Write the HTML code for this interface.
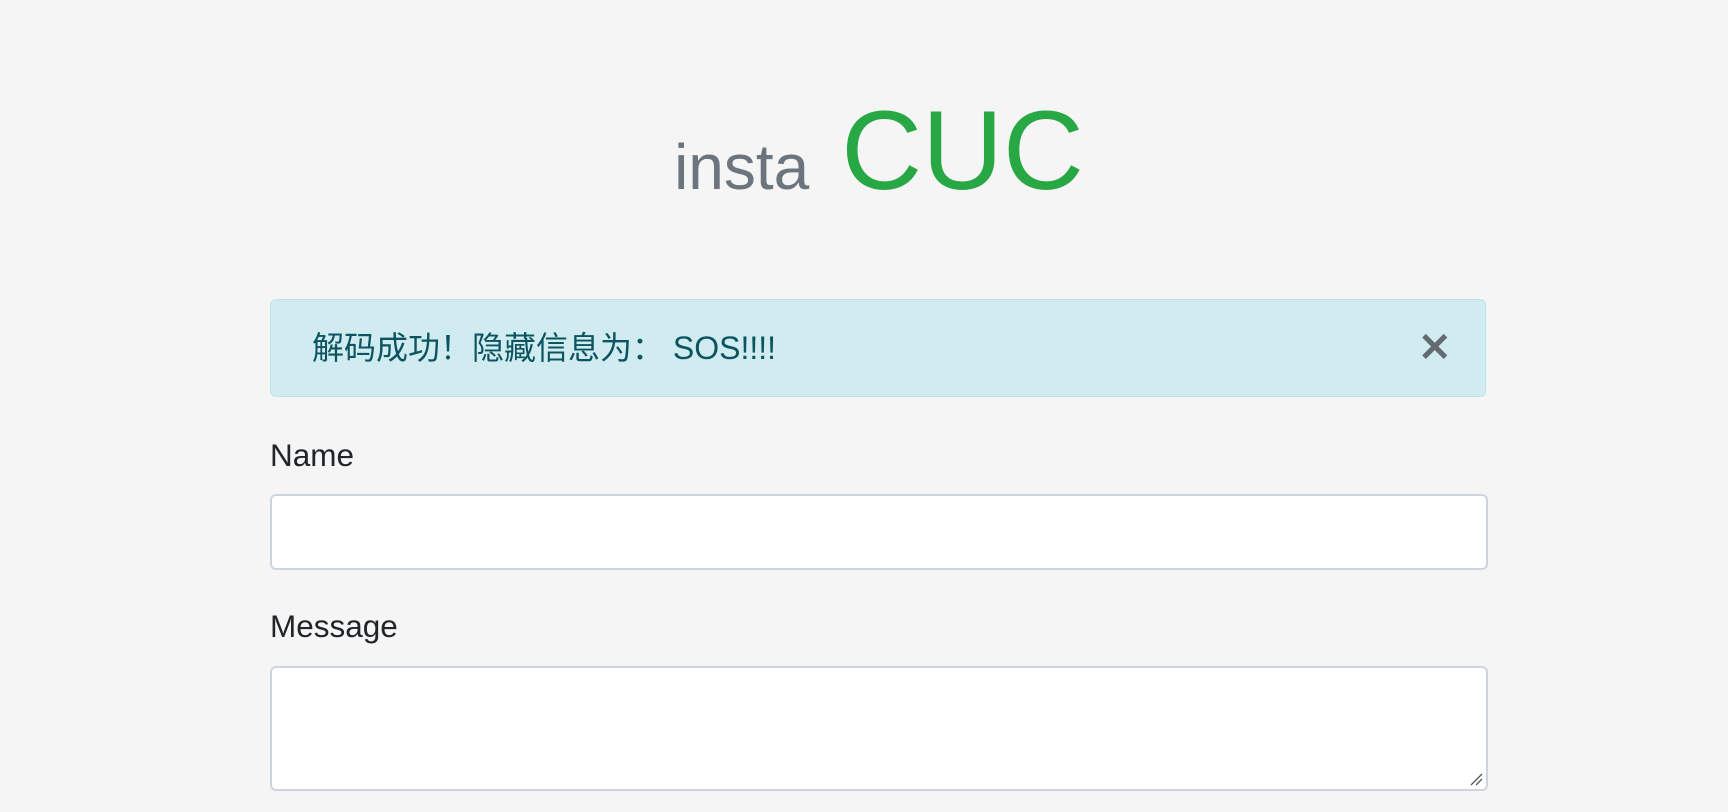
<!DOCTYPE html>
<html><head><meta charset="utf-8"><style>
body{margin:0;background:#f5f5f5;width:1728px;height:812px;overflow:hidden;font-family:"Liberation Sans","Noto Sans CJK SC",sans-serif;position:relative}
.t{position:absolute;left:0;width:1728px;text-align:center;top:86px;white-space:nowrap;padding-left:30px;box-sizing:border-box}
.i{color:#6c757d;font-size:64px}
.c{color:#28a745;font-size:112px;margin-left:32px}
.alert{position:absolute;left:270px;top:299px;width:1214px;height:96px;background:#d1ecf1;border:1px solid #bee5eb;border-radius:6px;color:#0c5460;font-size:32px;box-sizing:content-box}
.alert span{position:absolute;left:41px;top:29px;line-height:38px;white-space:nowrap}
.x{position:absolute;left:1147px;top:25px;font-size:40px;font-weight:bold;color:#646b70;line-height:46px}
.lbl{position:absolute;left:270px;font-size:31.5px;color:#212529}
.in{position:absolute;left:270px;width:1214px;background:#fff;border:2px solid #ced4da;border-radius:6px}
</style></head><body>
<div class="t"><span class="i">insta</span><span class="c">CUC</span></div>
<div class="alert"><span>解码成功！隐藏信息为： SOS!!!!</span><div class="x">✕</div></div>
<div class="lbl" style="top:437px">Name</div>
<div class="in" style="top:494px;height:72px"></div>
<div class="lbl" style="top:608px">Message</div>
<div class="in" style="top:666px;height:121px"><svg style="position:absolute;right:3px;bottom:3px" width="14" height="14"><path d="M2 13L13 2M7 13L13 7" stroke="#555" stroke-width="1.3"/></svg></div>
</body></html>
